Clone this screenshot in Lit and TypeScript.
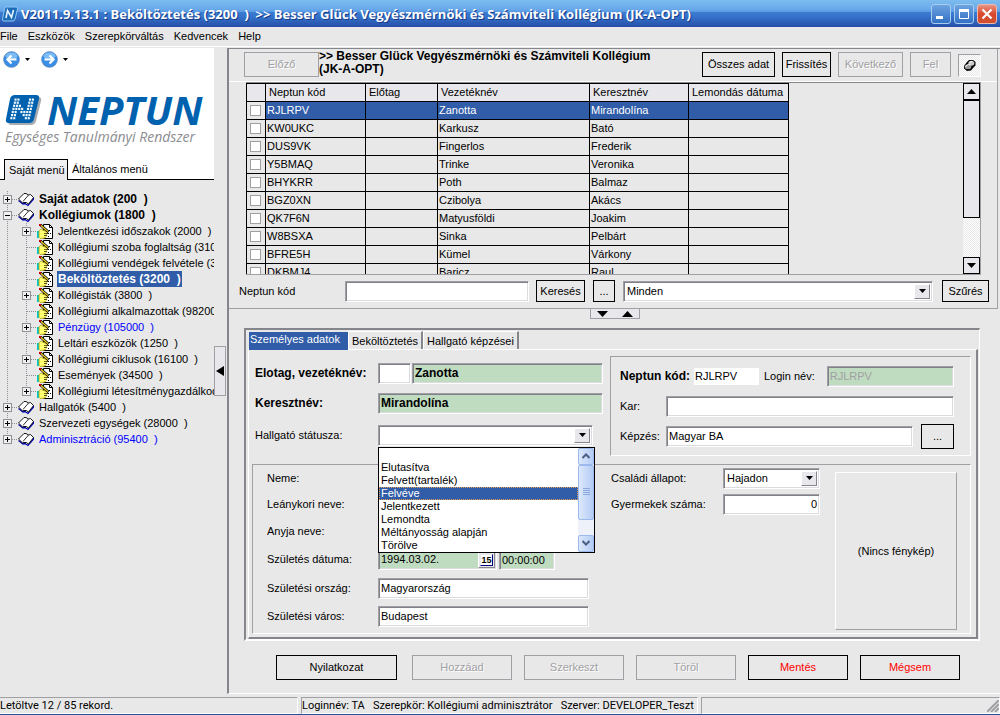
import { LitElement, html, svg, css, nothing } from "lit";
import { customElement } from "lit/decorators.js";
import { classMap } from "lit/directives/class-map.js";

const controls = css`
  * { box-sizing: border-box; }
  button, input, select { font: inherit; color: inherit; margin: 0; border-radius: 0; outline: none; }
  .btn { height: 25px; padding: 0; background: #e8e8e8; border: 1px solid #000; white-space: nowrap; text-align: center; }
  .btn:disabled { border-color: #a0a0a4; color: #a0a0a4; text-shadow: 1px 1px #fff; }
  .sunken {
    border: 1px solid; border-color: #a0a0a4 #fff #fff #a0a0a4;
    box-shadow: inset 1px 1px #808088, inset -1px -1px #dcdce0;
    background: #fff; height: 21px; padding: 1px 2px; min-width: 0;
  }
  .green { background: #c0dcc0; }
  .combo { display: flex; padding: 2px; }
  .combo select { flex: 1; min-width: 0; appearance: none; border: 0; background: transparent; padding: 0 1px; }
  .drop {
    width: 16px; flex: none; background: #e8e8ec; border: 1px solid; border-color: #fff #85858c #85858c #fff;
    display: flex; align-items: center; justify-content: center; pointer-events: none;
  }
`;

const caret = (dir: "up" | "down" | "left", w = 7, h = 4) => {
  const points = dir === "down" ? `0,0 ${w},0 ${w / 2},${h}`
    : dir === "up" ? `0,${h} ${w},${h} ${w / 2},0`
    : `${w},0 ${w},${h} 0,${h / 2}`;
  return html`<svg width=${w} height=${h} viewBox="0 0 ${w} ${h}" aria-hidden="true"><polygon points=${points} fill="#000"></polygon></svg>`;
};

interface Node { label: string; level: 0 | 1; box?: "+" | "-"; bold?: boolean; blue?: boolean; selected?: boolean; last?: boolean; }

const TREE: Node[] = [
  { label: "Saját adatok (200  )", level: 0, box: "+", bold: true },
  { label: "Kollégiumok (1800  )", level: 0, box: "-", bold: true },
  { label: "Jelentkezési időszakok (2000  )", level: 1, box: "+" },
  { label: "Kollégiumi szoba foglaltság (3100  )", level: 1 },
  { label: "Kollégiumi vendégek felvétele (3150  )", level: 1 },
  { label: "Beköltöztetés (3200  )", level: 1, bold: true, selected: true },
  { label: "Kollégisták (3800  )", level: 1, box: "+" },
  { label: "Kollégiumi alkalmazottak (98200  )", level: 1 },
  { label: "Pénzügy (105000  )", level: 1, box: "+", blue: true },
  { label: "Leltári eszközök (1250  )", level: 1 },
  { label: "Kollégiumi ciklusok (16100  )", level: 1, box: "+" },
  { label: "Események (34500  )", level: 1 },
  { label: "Kollégiumi létesítménygazdálkodás (98000  )", level: 1, box: "+", last: true },
  { label: "Hallgatók (5400  )", level: 0, box: "+" },
  { label: "Szervezeti egységek (28000  )", level: 0, box: "+" },
  { label: "Adminisztráció (95400  )", level: 0, box: "+", blue: true, last: true },
];

@customElement("menu-tree")
class MenuTree extends LitElement {
  static styles = css`
    :host { display: block; padding-top: 11px; }
    ul { list-style: none; margin: 0; padding: 0; }
    li { display: flex; height: 16px; align-items: center; white-space: pre; }
    svg { flex: none; display: block; }
    a { color: #000; text-decoration: none; line-height: 16px; height: 16px; margin-left: 4px; padding: 0 1px; }
    .child a { margin-left: 3px; }
    .bold { font-size: 12px; font-weight: bold; }
    .blue { color: #00f; }
    .selected { background: #305ca8; color: #fff; }
  `;

  private guide() {
    return html`<svg width="19" height="16" aria-hidden="true"><path d="M7.5 0V16" stroke="#909098" stroke-dasharray="1 1"></path></svg>`;
  }

  private joint(n: Node) {
    return html`<svg width="18" height="16" aria-hidden="true">
      <path d=${n.last ? "M7.5 0V8" : "M7.5 0V16"} stroke="#909098" stroke-dasharray="1 1"></path>
      <path d="M8 8.5H18" stroke="#909098" stroke-dasharray="1 1"></path>
      ${n.box ? svg`<rect x="3.5" y="4.5" width="8" height="8" fill="#f0f0f0" stroke="#909098"></rect>
        <path d=${n.box === "+" ? "M5 8.5H10M7.5 6V11" : "M5 8.5H10"} stroke="#000"></path>` : nothing}
    </svg>`;
  }

  private book() {
    return html`<svg width="16" height="16" viewBox="0 0 16 16" aria-hidden="true">
      <path d="M0.5 9.5 5 13 7 12.5 10 14.500 15.500 8V6.500" fill="none" stroke="#0000b0" stroke-width="1.300"></path>
      <path d="M0.500 8 6 2.500 8 2.500 10.500 4 12.500 3.500 15.500 6.500 10.500 13 8.500 11.500 6 11.500 4.500 11.800Z" fill="#fff" stroke="#000" stroke-width="0.900"></path>
      <path d="M10.500 4 5 10.500" stroke="#000" stroke-width="0.800"></path>
    </svg>`;
  }

  private note() {
    return html`<svg width="17" height="16" viewBox="0 0 17 16" aria-hidden="true">
      <path d="M6.500 1.500H12.500L15.500 4.500V15.500H6.500Z" fill="#fff" stroke="#000"></path>
      <path d="M12.500 1.500V4.500H15.500" fill="none" stroke="#000"></path>
      <path d="M12 7.500H14M11 10.500H14M11 13.500H13" stroke="#000" stroke-dasharray="1 1"></path>
      <rect x="0" y="8" width="2" height="7" fill="#00c8c8"></rect>
      <path d="M2 8 4 6 7 7.500 10.500 9 10 10.500 9.500 13 8 15 3 15.500 2 14.500Z" fill="#ffff70" stroke="#b09000" stroke-width="0.700"></path>
      <path d="M7 10.500H11M7 12.500H10" stroke="#403000" stroke-width="0.800"></path>
      <path d="M3.500 2 11.500 9" stroke="#000" stroke-width="2.600"></path>
      <path d="M4 2.500 11 8.600" stroke="#ffe820" stroke-width="1.200"></path>
      <rect x="2" y="1" width="2" height="2" fill="#c00000"></rect>
    </svg>`;
  }

  render() {
    return html`<ul role="tree">${TREE.map((n) => html`
      <li role="treeitem" class=${classMap({ child: n.level === 1 })}>
        ${n.level ? this.guide() : nothing}${this.joint(n)}${n.level ? this.note() : this.book()}<a
          href="#" class=${classMap({ bold: !!n.bold, blue: !!n.blue, selected: !!n.selected })}>${n.label}</a>
      </li>`)}</ul>`;
  }
}

@customElement("side-panel")
class SidePanel extends LitElement {
  static styles = [controls, css`
    :host { display: flex; flex: none; width: 227px; }
    .content { width: 214px; overflow: hidden; }
    .head { background: #fff; height: 132px; display: flex; flex-direction: column; }
    .nav { display: flex; align-items: center; padding: 3px 0 0 3px; height: 19px; gap: 5px; }
    .round { border: 0; background: none; padding: 0; width: 17px; height: 17px; }
    .round svg { display: block; }
    .nav .gap { width: 1px; }
    .brand { color: #0062ae; margin: 24px 0 0 5px; }
    .logo { display: flex; align-items: center; height: 38px; gap: 5px; }
    .name { font: italic 700 40px/38px "Open Sans", sans-serif; }
    .slogan { color: #8c8c90; font: italic 14px/16px "Open Sans", sans-serif; white-space: nowrap; }
    .tabs { margin-top: auto; display: flex; align-items: stretch; }
    .tabs i { width: 4px; border-bottom: 1px solid #000; }
    .tabs button { border: 0; background: none; height: 21px; border-bottom: 1px solid #000; padding: 1px 4px 0; white-space: nowrap; }
    .tabs .on { border: 1px solid #000; border-bottom: 0; background: linear-gradient(#f2f2f4, #e8e8ec); width: 64px; }
    .tabs .rest { flex: 1; text-align: left; }
    .split { width: 13px; display: flex; align-items: center; }
    .handle { width: 12px; height: 50px; border: 1px solid #a0a0a4; background: #e8e8ec; padding: 0; display: flex; align-items: center; justify-content: center; }
  `];

  private arrow(right: boolean) {
    return html`<svg width="17" height="17" viewBox="0 0 17 17" aria-hidden="true">
      <circle cx="8.500" cy="8.500" r="7.800" fill="#3a8ee6" stroke="#4a7cb8" stroke-width="0.800"></circle>
      <ellipse cx="8.500" cy="5" rx="6" ry="3.500" fill="#7cbcf6"></ellipse>
      <path d=${right ? "M3.500 8.500H12M8.500 4.500 12.500 8.500 8.500 12.500" : "M13.500 8.500H5M8.500 4.500 4.500 8.500 8.500 12.500"} fill="none" stroke="#fff" stroke-width="2.200"></path>
    </svg>`;
  }

  render() {
    const dots: [number, number][] = [];
    for (let r = 0; r < 7; r++) for (let c = 0; c < 7; c++)
      if (c < 2 || c > 4 || c === r || c === r - 1) dots.push([c, r]);
    return html`
      <div class="content">
        <div class="head">
          <div class="nav">
            <button class="round" aria-label="Vissza">${this.arrow(false)}</button>${caret("down", 5, 3)}
            <span class="gap"></span>
            <button class="round" aria-label="Előre">${this.arrow(true)}</button>${caret("down", 5, 3)}
          </div>
          <div class="brand">
            <div class="logo">
              <svg width="37" height="32" viewBox="0 0 37 32" aria-hidden="true">
                <path d="M12 3H33Q37 3 36 7L31 27Q30 31 26 31H6Q3 31 3.500 28L8 7Q9 3 12 3Z" fill="#a8acb0"></path>
                <path d="M10 1H31Q35 1 34 5L29 25Q28 29 24 29H4Q0 29 1 25L5 5Q6 1 10 1Z" fill="#0062ae"></path>
                ${dots.map(([c, r]) => svg`<rect x=${9.5 + c * 2.9 - r * 0.7} y=${4.5 + r * 3.1} width="2.100" height="2.200" fill="#f0f8ff"></rect>`)}
              </svg>
              <span class="name">NEPTUN</span>
            </div>
            <div class="slogan">Egységes Tanulmányi Rendszer</div>
          </div>
          <div class="tabs" role="tablist">
            <i></i><button role="tab" class="on">Saját menü</button><button role="tab" class="rest">Általános menü</button>
          </div>
        </div>
        <menu-tree></menu-tree>
      </div>
      <div class="split"><button class="handle" aria-label="Menü elrejtése">${caret("left", 8, 10)}</button></div>`;
  }
}

const ROWS = [
  ["RJLRPV", "Zanotta", "Mirandolína"], ["KW0UKC", "Karkusz", "Bató"], ["DUS9VK", "Fingerlos", "Frederik"],
  ["Y5BMAQ", "Trinke", "Veronika"], ["BHYKRR", "Poth", "Balmaz"], ["BGZ0XN", "Czibolya", "Akács"],
  ["QK7F6N", "Matyusföldi", "Joakim"], ["W8BSXA", "Sinka", "Pelbárt"], ["BFRE5H", "Kümel", "Várkony"],
  ["DKBMJ4", "Baricz", "Raul"],
];

@customElement("record-list")
class RecordList extends LitElement {
  static styles = [controls, css`
    :host { display: block; border-right: 1px solid #a0a0a4; border-bottom: 1px solid #a0a0a4; margin-right: 2px; }
    .bar { display: flex; align-items: flex-start; padding: 3px 16px 0 15px; height: 33px; border-bottom: 1px solid #fff; }
    h1 { font-size: 12px; line-height: 13px; margin: -2px 0 0; flex: 1; padding-right: 50px; }
    .prev { width: 75px; }
    .all { width: 73px; }
    .refresh { width: 49px; }
    .next { width: 65px; }
    .up { width: 41px; }
    .actions { display: flex; gap: 7px; }
    .pin { width: 23px; height: 23px; margin-top: 2px; border: 1px solid; border-color: #a0a0a4 #fff #fff #a0a0a4; padding: 0; background: repeating-conic-gradient(#fff 0 25%, #e8e8e8 0 50%) 0 0 / 2px 2px; display: flex; align-items: center; justify-content: center; }
    .grid { margin: 0 16px 0 17px; height: 193px; display: flex; justify-content: space-between; overflow: hidden; border-top: 1px solid #85858c; border-bottom: 1px solid #a0a0a4; border-right: 1px solid #a0a0a4; }
    .view { overflow: hidden; }
    table { border-collapse: collapse; table-layout: fixed; width: 543px; }
    th, td { border: 1px solid #000; height: 18px; padding: 0 1px; font-weight: normal; text-align: left; line-height: 15px; white-space: nowrap; }
    th { padding-left: 3px; background: #e8e8ec; }
    td.tick { padding: 0; }
    td input { appearance: none; display: block; width: 11px; height: 11px; margin: 1px 3px; border: 1px solid #a0a0a4; background: #fff; }
    tr.on td { background: #305ca8; color: #fff; }
    tr.on td.tick { background: #e8e8e8; }
    .scroll { width: 17px; display: flex; flex-direction: column; background: repeating-conic-gradient(#fff 0 25%, #e8e8e8 0 50%) 0 0 / 2px 2px; }
    .scroll button { flex: none; height: 17px; background: #e8e8ec; border: 1px solid #000; padding: 0; display: flex; align-items: center; justify-content: center; }
    .thumb { height: 118px; background: #e8e8ec; border: 1px solid #000; }
    .space { flex: 1; }
    .search { display: flex; align-items: center; padding: 5px 8px 6px 10px; }
    .search label { width: 106px; }
    .search .btn { height: 22px; }
    .code { width: 184px; }
    .find { width: 49px; margin: 0 8px 0 7px; }
    .more { width: 22px; }
    .combo { flex: 1; margin: 0 9px 0 8px; }
    .filter { width: 47px; }
  `];

  render() {
    return html`
      <div class="bar">
        <button class="btn prev" disabled>Előző</button>
        <h1>&gt;&gt; Besser Glück Vegyészmérnöki és Számviteli Kollégium (JK-A-OPT)</h1>
        <div class="actions">
          <button class="btn all">Összes adat</button><button class="btn refresh">Frissítés</button>
          <button class="btn next" disabled>Következő</button><button class="btn up" disabled>Fel</button>
          <button class="pin" aria-label="Rögzítés"><svg width="13" height="13" viewBox="0 0 13 13" aria-hidden="true">
            <path d="M4 3 6 1H10L12.500 3V6.500L10.500 8.500 8 11.500 4 12 1 9.500V7Z" fill="#000"></path>
            <ellipse cx="8.300" cy="4.300" rx="3" ry="2.500" fill="#c8c8c8"></ellipse>
            <ellipse cx="5" cy="7.800" rx="3.300" ry="2.500" fill="#989898"></ellipse>
            <path d="M2.500 8Q3.500 6 5.500 5.500L7.500 6M6.500 4Q7.500 2.500 9.500 2.500" stroke="#fff" fill="none"></path>
          </svg></button>
        </div>
      </div>
      <div class="grid">
        <div class="view"><table>
          <colgroup><col style="width:19px"><col style="width:100px"><col style="width:72px"><col style="width:152px"><col style="width:99px"><col style="width:100px"></colgroup>
          <thead><tr><th></th><th>Neptun kód</th><th>Előtag</th><th>Vezetéknév</th><th>Keresztnév</th><th>Lemondás dátuma</th></tr></thead>
          <tbody>${ROWS.map(([code, last, first], i) => html`
            <tr class=${classMap({ on: i === 0 })}>
              <td class="tick"><input type="checkbox" aria-label=${code}></td><td>${code}</td><td></td><td>${last}</td><td>${first}</td><td></td>
            </tr>`)}</tbody>
        </table></div>
        <div class="scroll">
          <button aria-label="Fel">${caret("up", 9, 5)}</button><div class="thumb"></div><div class="space"></div><button aria-label="Le">${caret("down", 9, 5)}</button>
        </div>
      </div>
      <div class="search">
        <label for="code">Neptun kód</label><input id="code" class="sunken code">
        <button class="btn find">Keresés</button><button class="btn more">...</button>
        <div class="sunken combo"><select aria-label="Szűrő"><option>Minden</option></select><span class="drop">${caret("down")}</span></div>
        <button class="btn filter">Szűrés</button>
      </div>`;
  }
}

const STATUSES = ["", "Elutasítva", "Felvett(tartalék)", "Felvéve", "Jelentkezett", "Lemondta", "Méltányosság alapján", "Törölve"];

@customElement("person-form")
class PersonForm extends LitElement {
  static styles = [controls, css`
    :host { display: block; margin: 9px 20px 0 15px; border: 2px solid; border-color: #85858c #fff #fff #85858c; border-right-width: 1px; padding: 0 1px 0 2px; }
    .tabs { display: flex; padding-left: 1px; height: 19px; align-items: stretch; }
    .tabs button { border: 0; background: none; border-top: 1px solid #fff; border-right: 2px solid #85858c; border-left: 1px solid #fff; padding: 2px 3px 0; margin-top: 1px; white-space: nowrap; }
    .tabs .on { width: 99px; margin: 2px 0 -1px; background: #305ca8; color: #fff; border: 0; padding: 0 1px 3px; text-align: left; z-index: 1; }
    .page { border: 1px solid; border-color: #fff #85858c #85858c #fff; border-right-width: 2px; border-bottom-width: 2px; padding: 6px 5px 3px 3px; }
    .group { border: 1px solid; border-color: #a0a0a4 #fff #fff #a0a0a4; }
    .top { display: flex; gap: 7px; margin-bottom: 8px; }
    .left { width: 351px; padding: 2px 0 0 3px; display: grid; grid-template-columns: 123px 1fr; grid-template-rows: 30px 30px 34px; align-items: center; }
    .right { flex: 1; min-width: 0; padding: 4px 16px 4px 9px; display: grid; grid-auto-rows: 30px; align-items: center; }
    .line { display: flex; align-items: center; }
    .bold { font-weight: bold; font-size: 12px; }
    .field { font-weight: bold; font-size: 12px; }
    .title { width: 33px; margin-right: 1px; }
    .grow { flex: 1; }
    .key { width: 46px; }
    .code { width: 65px; height: 17px; border: 0; background: #fff; padding: 0 1px; margin: 0 5px 0 4px; }
    .login { margin-left: 12px; color: #a0a0a4; }
    .pick { width: 33px; margin-left: 8px; }
    .status { width: 215px; position: relative; }
    .popup { position: absolute; z-index: 5; left: -1px; top: 21px; width: 217px; border: 1px solid #000; background: #fff; display: flex; }
    .popup select { flex: 1; min-width: 0; height: 104px; appearance: none; border: 0; padding: 0; overflow: hidden; background: #fff; scrollbar-width: none; }
    .popup option { height: 13px; min-height: 13px; line-height: 13px; padding: 0 2px; }
    .popup option:checked { background: linear-gradient(#305ca8, #305ca8); color: #fff; -webkit-text-fill-color: #fff; outline: 1px dotted #e0a050; outline-offset: -1px; }
    .bar { width: 16px; display: flex; flex-direction: column; background: #eef0fa; }
    .bar button { height: 17px; padding: 0; border: 1px solid #9cb8ec; background: linear-gradient(90deg, #dce8fc, #b4ccf4); border-radius: 2px; display: flex; align-items: center; justify-content: center; }
    .bar .thumb { height: 55px; border: 1px solid #9cb8ec; background: linear-gradient(90deg, #dce8fc, #b4ccf4); border-radius: 2px; display: flex; align-items: center; justify-content: center; }
    .bar .space { flex: 1; }
    .bottom { display: flex; padding: 0 13px 3px 14px; }
    .details { display: grid; grid-template-columns: 111px 211px; grid-template-rows: 26px 26px 28px 29px 28px 28px; align-items: center; width: 344px; }
    .date { width: 119px; display: flex; padding: 1px; margin-right: 2px; height: 20px; }
    .date input { border: 0; background: transparent; min-width: 0; flex: 1; padding: 0 1px; }
    .cal { width: 17px; border: 1px solid; border-color: #fff #85858c #85858c #fff; background: #e8e8ec; padding: 0; display: flex; align-items: center; justify-content: center; }
    .cal span { border: 1px solid; border-color: #e8e8ec #000080 #000080 #e8e8ec; background: #fff; font: bold 9px/10px "Liberation Sans", sans-serif; color: #000; }
    .time { width: 56px; height: 20px; }
    .family { display: grid; grid-template-columns: 112px 97px; grid-auto-rows: 26px; align-items: center; flex: 1; align-content: start; }
    .num { text-align: right; width: 97px; }
    .photo { width: 122px; margin-top: 7px; border: 1px solid; border-color: #fff #a0a0a4 #a0a0a4 #fff; display: flex; align-items: center; justify-content: center; }
  `];

  private text(id: string, label: string, value = "") {
    return html`<label for=${id}>${label}</label><input id=${id} class="sunken" .value=${value}>`;
  }

  render() {
    return html`
      <div class="tabs" role="tablist">
        <button role="tab" class="on">Személyes adatok</button><button role="tab">Beköltöztetés</button><button role="tab">Hallgató képzései</button>
      </div>
      <div class="page">
        <div class="top">
          <div class="left">
            <label class="bold" for="last">Elotag, vezetéknév:</label>
            <div class="line"><input class="sunken title" aria-label="Előtag"><input id="last" class="sunken green field grow" .value=${"Zanotta"}></div>
            <label class="bold" for="first">Keresztnév:</label>
            <input id="first" class="sunken green field" .value=${"Mirandolína"}>
            <label for="status">Hallgató státusza:</label>
            <div class="sunken combo status">
              <select id="status"><option></option></select><span class="drop">${caret("down")}</span>
              <div class="popup">
                <select size="8" aria-label="Hallgató státusza">${STATUSES.map((s) => html`<option ?selected=${s === "Felvéve"}>${s}</option>`)}</select>
                <div class="bar">
                  <button aria-label="Fel"><svg width="8" height="6" viewBox="0 0 8 6"><path d="M0.500 5 4 1.500 7.500 5" fill="none" stroke="#4d6185" stroke-width="2"></path></svg></button>
                  <div class="thumb"><svg width="7" height="8"><path d="M0 0.500H7M0 2.500H7M0 4.500H7M0 6.500H7" stroke="#8ca8dc"></path></svg></div>
                  <div class="space"></div>
                  <button aria-label="Le"><svg width="8" height="6" viewBox="0 0 8 6"><path d="M0.500 1 4 4.500 7.500 1" fill="none" stroke="#4d6185" stroke-width="2"></path></svg></button>
                </div>
              </div>
            </div>
          </div>
          <div class="group right">
            <div class="line">
              <label class="bold" for="ncode">Neptun kód:</label><input id="ncode" class="code" .value=${"RJLRPV"}>
              <label for="login">Login név:</label><input id="login" disabled class="sunken green login grow" .value=${"RJLRPV"}>
            </div>
            <div class="line"><label class="key" for="kar">Kar:</label><input id="kar" class="sunken grow"></div>
            <div class="line"><label class="key" for="kepzes">Képzés:</label><input id="kepzes" class="sunken grow" .value=${"Magyar BA"}><button class="btn pick">...</button></div>
          </div>
        </div>
        <div class="group bottom">
          <div class="details">
            ${this.text("sex", "Neme:")}${this.text("maiden", "Leánykori neve:")}${this.text("mother", "Anyja neve:")}
            <label for="born">Születés dátuma:</label>
            <div class="line"><div class="sunken green date"><input id="born" .value=${"1994.03.02."}><button class="cal" aria-label="Naptár"><span>15</span></button></div><input class="sunken green time" aria-label="Időpont" .value=${"00:00:00"}></div>
            ${this.text("country", "Születési ország:", "Magyarország")}${this.text("city", "Születési város:", "Budapest")}
          </div>
          <div class="family">
            <label for="family">Családi állapot:</label>
            <div class="sunken combo"><select id="family"><option>Hajadon</option></select><span class="drop">${caret("down")}</span></div>
            <label for="kids">Gyermekek száma:</label><input id="kids" class="sunken num" .value=${"0"}>
          </div>
          <div class="photo">(Nincs fénykép)</div>
        </div>
      </div>`;
  }
}

@customElement("app-root")
class AppRoot extends LitElement {
  static styles = [controls, css`
    :host { box-sizing: border-box; display: flex; flex-direction: column; min-height: 100vh; background: #e8e8e8; color: #000; font: 11px/13px "Liberation Sans", Arial, sans-serif; border-bottom: 1px solid #2850a0; }
    .titlebar { height: 27px; flex: none; display: flex; align-items: center; gap: 3px; padding: 0 3px 0 2px; color: #fff; background: linear-gradient(#7cbcee, #6cacec 30%, #5c9ce4 43%, #3c7cd0 46%, #3470c8 65%, #2c5cb4 85%, #284cac); }
    .caption { flex: 1; white-space: pre; font: bold 13px/18px "Open Sans", sans-serif; text-shadow: 1px 1px #183c88; }
    .win { width: 20px; height: 20px; padding: 0; border: 1px solid #a8ccf0; border-radius: 3px; background: linear-gradient(#6ca4e0, #3470c4); display: flex; align-items: center; justify-content: center; }
    .close { background: linear-gradient(#e89484, #d8482c 50%, #d05030); border-color: #f0b8ac; }
    .winset { display: flex; gap: 3px; }
    .menu { display: flex; gap: 10px; height: 20px; flex: none; align-items: center; border-bottom: 1px solid #fff; }
    .menu a { color: #000; text-decoration: none; }
    .body { flex: 1; display: flex; margin-top: 1px; }
    main { flex: 1; min-width: 0; border-left: 2px solid #85858c; border-top: 1px solid #85858c; border-bottom: 1px solid #fff; }
    .toggle { display: flex; justify-content: center; }
    .toggle button { border: 1px solid #a0a0a4; border-top: 0; background: #e8e8ec; width: 50px; height: 10px; padding: 0; display: flex; gap: 14px; align-items: center; justify-content: center; }
    .foot { display: flex; gap: 12px; padding: 14px 38px 13px 47px; }
    .foot .btn { width: 100px; flex: none; }
    .foot .first { width: 121px; margin-right: 3px; }
    .foot .red { color: #f00; }
    .status { display: flex; gap: 3px; height: 20px; flex: none; padding-top: 3px; font: 11px/14px Roboto, sans-serif; white-space: pre; }
    .status div { border: 1px solid; border-color: #a0a0a4 #fff #fff #a0a0a4; padding: 1px 0; }
    .status .count { width: 298px; border-left: 0; }
    .who { min-width: 397px; }
    .blank { flex: 1; display: flex; justify-content: flex-end; align-items: flex-end; }
  `];

  render() {
    return html`
      <header class="titlebar">
        <svg width="16" height="16" viewBox="0 0 16 16" aria-hidden="true">
          <path d="M4 1H14Q16 1 15.500 3L13 13Q12.500 15 11 15H2Q0 15 0.500 13L2.500 3Q3 1 4 1Z" fill="#1c6cb8" stroke="#90c8f4"></path>
          <path d="M4 12 5.500 4.500 9.500 11.500 11.500 4" fill="none" stroke="#e8f4ff" stroke-width="1.600"></path>
        </svg>
        <span class="caption">V2011.9.13.1 : Beköltöztetés (3200  )  &gt;&gt; Besser Glück Vegyészmérnöki és Számviteli Kollégium (JK-A-OPT)</span>
        <div class="winset">
          <button class="win" aria-label="Kis méret"><svg width="12" height="12"><rect x="1" y="8" width="7" height="3" fill="#fff"></rect></svg></button>
          <button class="win" aria-label="Teljes méret"><svg width="12" height="12"><path d="M1.500 1V10.500H10.500V1" fill="none" stroke="#fff"></path><rect x="1" y="1" width="10" height="3" fill="#fff"></rect></svg></button>
          <button class="win close" aria-label="Bezárás"><svg width="12" height="12"><path d="M1.500 1.500 10.500 10.500M10.500 1.500 1.500 10.500" stroke="#fff" stroke-width="2.200"></path></svg></button>
        </div>
      </header>
      <nav class="menu">${["File", "Eszközök", "Szerepkörváltás", "Kedvencek", "Help"].map((m) => html`<a href="#">${m}</a>`)}</nav>
      <div class="body">
        <side-panel></side-panel>
        <main>
          <record-list></record-list>
          <div class="toggle"><button aria-label="Panel átméretezése">${caret("down", 11, 6)}${caret("up", 11, 6)}</button></div>
          <person-form></person-form>
          <div class="foot">
            <button class="btn first">Nyilatkozat</button><button class="btn" disabled>Hozzáad</button><button class="btn" disabled>Szerkeszt</button>
            <button class="btn" disabled>Töröl</button><button class="btn red">Mentés</button><button class="btn red">Mégsem</button>
          </div>
        </main>
      </div>
      <footer class="status">
        <div class="count">Letöltve 12 / 85 rekord.</div>
        <div class="who">Loginnév: TA   Szerepkör: Kollégiumi adminisztrátor   Szerver: DEVELOPER_Teszt</div>
        <div class="blank"><svg width="12" height="12" aria-hidden="true"><path d="M0 12 12 0M4 12 12 4M8 12 12 8" stroke="#a0a0a4" stroke-width="2"></path></svg></div>
      </footer>`;
  }
}
